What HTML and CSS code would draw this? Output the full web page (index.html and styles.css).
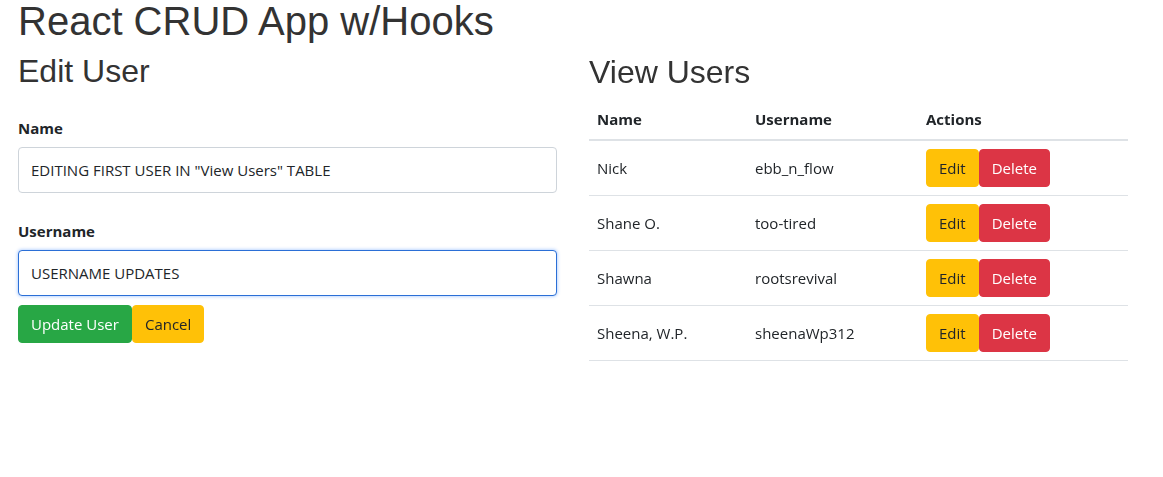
FILE: index.html
```html
<!DOCTYPE html>
<html lang="en">
<head>
<meta charset="utf-8">
<title>React CRUD App w/Hooks</title>
<link rel="stylesheet" href="styles.css">
</head>
<body>
<div class="app">
  <h1 class="title">React CRUD App w/Hooks</h1>
  <div class="row">
    <div class="col">
      <h2 class="heading">Edit User</h2>
      <form class="form">
        <label class="label" for="name">Name</label>
        <input class="field field-name" id="name" type="text" value="EDITING FIRST USER IN &quot;View Users&quot; TABLE">
        <label class="label" for="username">Username</label>
        <input class="field field-focus" id="username" type="text" value="USERNAME UPDATES" autofocus>
        <div class="actions"><button type="button" class="btn btn-green">Update User</button><button type="button" class="btn btn-yellow">Cancel</button></div>
      </form>
    </div>
    <div class="col">
      <h2 class="heading heading-right">View Users</h2>
      <table class="table">
        <thead>
          <tr><th class="c1">Name</th><th class="c2">Username</th><th>Actions</th></tr>
        </thead>
        <tbody>
          <tr><td>Nick</td><td>ebb_n_flow</td><td><button class="btn btn-yellow">Edit</button><button class="btn btn-red">Delete</button></td></tr>
          <tr><td>Shane O.</td><td>too-tired</td><td><button class="btn btn-yellow">Edit</button><button class="btn btn-red">Delete</button></td></tr>
          <tr><td>Shawna</td><td>rootsrevival</td><td><button class="btn btn-yellow">Edit</button><button class="btn btn-red">Delete</button></td></tr>
          <tr><td>Sheena, W.P.</td><td>sheenaWp312</td><td><button class="btn btn-yellow">Edit</button><button class="btn btn-red">Delete</button></td></tr>
        </tbody>
      </table>
    </div>
  </div>
</div>
</body>
</html>
```

FILE: styles.css
```css
* { box-sizing: border-box; }
html, body { margin: 0; padding: 0; background: #fff; }
body {
  font-family: "Open Sans", "Noto Sans", sans-serif;
  font-size: 16px;
  line-height: 1.5;
  color: #212529;
}
.app { padding-left: 18px; }
.title {
  margin: 0 0 10px 0;
  font-family: "Liberation Sans", Arial, sans-serif;
  font-weight: 400;
  font-size: 40px;
  line-height: 42px;
  color: #333;
}
.row { display: flex; gap: 32px; }
.col { width: 539px; }
.heading {
  margin: 0;
  font-family: "Liberation Sans", Arial, sans-serif;
  font-weight: 400;
  font-size: 32px;
  line-height: 38px;
  color: #333;
}
.heading-right { margin-top: 1px; }
.form { display: flex; flex-direction: column; margin-top: 26px; }
.label {
  font-weight: 700;
  line-height: 24px;
  margin-bottom: 7px;
  font-size: 15px;
}
.field {
  height: 46px;
  width: 539px;
  padding: 10px 12px;
  font-family: inherit;
  font-size: 15px;
  color: #212529;
  caret-color: #000;
  border: 1px solid #ced4da;
  border-radius: 4px;
  background: #fff;
  outline: none;
}
.field-name { margin-bottom: 26px; }
.field-focus {
  border-color: #2b6fd6;
  box-shadow: 0 0 3px 1px rgba(70, 140, 255, 0.35);
}
.actions { display: flex; margin-top: 9px; }
.btn {
  display: inline-block;
  font-family: inherit;
  font-size: 15px;
  line-height: 24px;
  padding: 6px 12px;
  border: 1px solid transparent;
  border-radius: 4px;
  cursor: pointer;
  vertical-align: middle;
}
.btn-green { background: #28a745; border-color: #28a745; color: #fff; }
.btn-yellow { background: #ffc107; border-color: #ffc107; color: #212529; }
.btn-red { background: #dc3545; border-color: #dc3545; color: #fff; }
.table {
  width: 539px;
  margin-top: 8px;
  border-collapse: collapse;
  font-size: 15px;
}
.table th {
  text-align: left;
  font-weight: 700;
  padding: 8px 8px;
  line-height: 24px;
  border-bottom: 2px solid #dee2e6;
}
.table td {
  padding: 8px 8px;
  line-height: 24px;
  vertical-align: middle;
  border-bottom: 1px solid #dee2e6;
  white-space: nowrap;
}
.c1 { width: 158px; }
.c2 { width: 171px; }
```
